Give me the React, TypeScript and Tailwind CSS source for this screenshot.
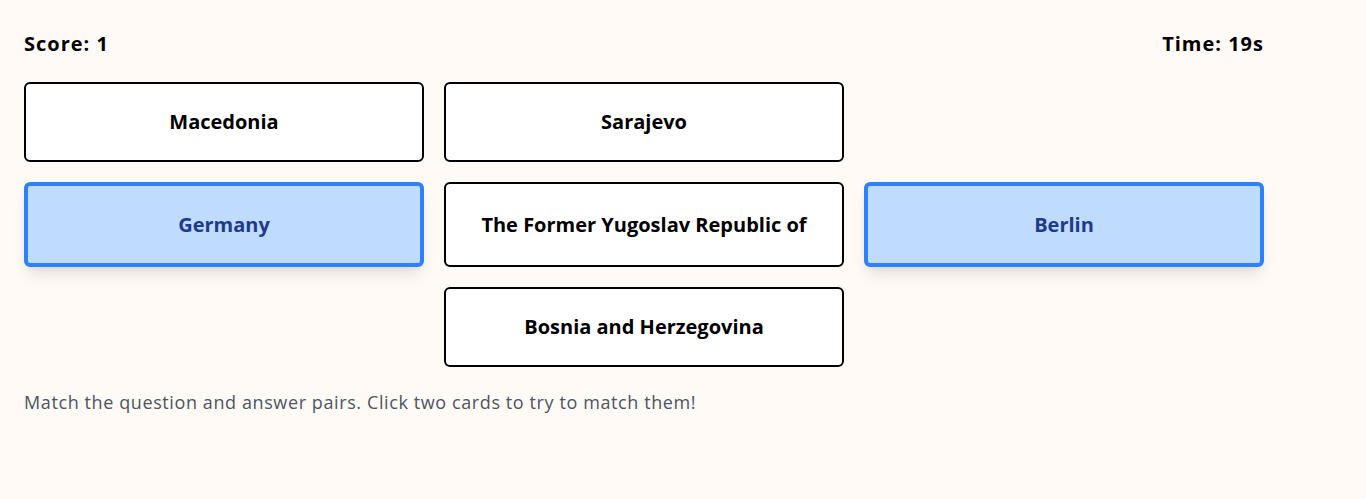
import React from "react";

type Card = { id: number; text: string; selected?: boolean; hidden?: boolean };

const cards: Card[] = [
  { id: 1, text: "Macedonia" },
  { id: 2, text: "Sarajevo" },
  { id: 3, text: "", hidden: true },
  { id: 4, text: "Germany", selected: true },
  { id: 5, text: "The Former Yugoslav Republic of" },
  { id: 6, text: "Berlin", selected: true },
  { id: 7, text: "", hidden: true },
  { id: 8, text: "Bosnia and Herzegovina" },
  { id: 9, text: "", hidden: true },
];

const App: React.FC = () => {
  return (
    <main
      className="min-h-screen bg-[#fffaf5] px-6 pt-[30px] text-black"
      style={{ fontFamily: "'Open Sans', 'Noto Sans', sans-serif" }}
    >
      <div className="w-[1240px]">
        <div className="flex justify-between text-xl font-bold leading-7 tracking-[1px] mb-6">
          <span>Score: 1</span>
          <span>Time: 19s</span>
        </div>
        <div className="grid grid-cols-[400px_400px_400px] gap-5">
          {cards.map((card) =>
            card.hidden ? (
              <div key={card.id} />
            ) : (
              <button
                key={card.id}
                className={
                  card.selected
                    ? "flex items-center justify-center rounded-md border-4 border-[#2f80ff] bg-[#bfdbfe] h-[85px] text-xl font-bold leading-7 text-[#1e3a8a] shadow-lg"
                    : "flex items-center justify-center rounded-md border-2 border-black bg-white py-6 text-xl font-bold leading-7"
                }
              >
                {card.text}
              </button>
            )
          )}
        </div>
        <p className="mt-[21px] text-lg leading-7 tracking-[0.6px] text-[#4b5563]">
          Match the question and answer pairs. Click two cards to try to match them!
        </p>
      </div>
    </main>
  );
};

export default App;
